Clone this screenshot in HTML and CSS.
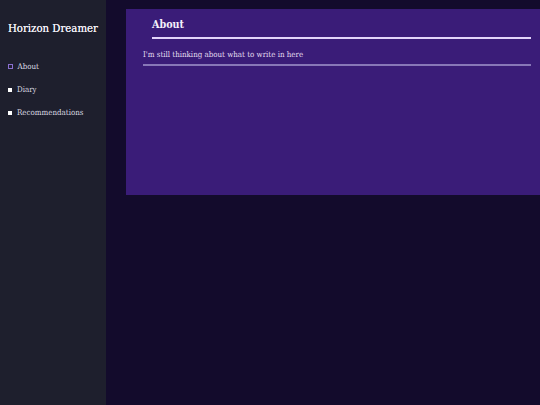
FILE: index.html
```html
<!DOCTYPE html>
<html>
<head>
<meta charset="utf-8">
<link rel="stylesheet" href="styles.css">
</head>
<body>
<div class="layout">
  <aside class="sidebar">
    <h1 class="site-title">Horizon Dreamer</h1>
    <ul class="nav">
      <li class="nav-item active"><span class="bullet"></span>About</li>
      <li class="nav-item"><span class="bullet"></span>Diary</li>
      <li class="nav-item"><span class="bullet"></span>Recommendations</li>
    </ul>
  </aside>
  <main class="main">
    <section class="panel">
      <h2 class="panel-title">About</h2>
      <p class="panel-text">I'm still thinking about what to write in here</p>
    </section>
  </main>
</div>
</body>
</html>
```
FILE: styles.css
```css
html, body {
  margin: 0;
  padding: 0;
  height: 100%;
  overflow: hidden;
}
body {
  background: #130b2c;
  font-family: "DejaVu Serif", "Liberation Serif", serif;
  color: #e8e4f0;
}
.layout {
  display: flex;
  height: 405px;
  width: 540px;
  overflow: hidden;
}
.sidebar {
  width: 106px;
  flex: none;
  background: #1e1f2d;
  padding: 21px 0 0 8px;
  box-sizing: border-box;
}
.site-title {
  margin: 0;
  font-family: "DejaVu Serif Condensed", "DejaVu Serif", serif;
  font-stretch: condensed;
  font-size: 11.3px;
  font-weight: normal;
  color: #f2f0f6;
  line-height: 16px;
  white-space: nowrap;
  text-shadow: 0 0 0.3px #f2f0f6;
}
.nav {
  list-style: none;
  margin: 24px 0 0 0;
  padding: 0;
  display: flex;
  flex-direction: column;
  gap: 12px;
}
.nav-item {
  display: flex;
  align-items: center;
  gap: 5px;
  font-family: "DejaVu Serif Condensed", "DejaVu Serif", serif;
  font-stretch: condensed;
  font-size: 7.9px;
  line-height: 11px;
  color: #dcdae2;
  white-space: nowrap;
}
.bullet {
  width: 4px;
  height: 4px;
  background: #ffffff;
  border: 0;
  flex: none;
}
.nav-item.active .bullet {
  width: 2.5px;
  height: 2.5px;
  background: transparent;
  border: 1px solid #8a6fd0;
}
.main {
  flex: 1;
  padding: 9px 0 0 20px;
  min-width: 0;
}
.panel {
  width: 422px;
  height: 186px;
  box-sizing: border-box;
  background: #3a1c78;
  padding: 8px 17px 0 17px;
}
.panel-title {
  margin: 0 0 0 9px;
  padding: 0 0 4px 0;
  font-family: "DejaVu Serif Condensed", "DejaVu Serif", serif;
  font-stretch: condensed;
  font-size: 10.7px;
  font-weight: bold;
  line-height: 16px;
  color: #f4f0fa;
  border-bottom: 2px solid #e2d4fa;
}
.panel-text {
  margin: 11px 0 0 0;
  padding: 0 0 4px 0;
  font-family: "DejaVu Serif Condensed", "DejaVu Serif", serif;
  font-stretch: condensed;
  font-size: 7.9px;
  line-height: 10px;
  color: #e4def0;
  border-bottom: 2px solid #8877b8;
}
```
